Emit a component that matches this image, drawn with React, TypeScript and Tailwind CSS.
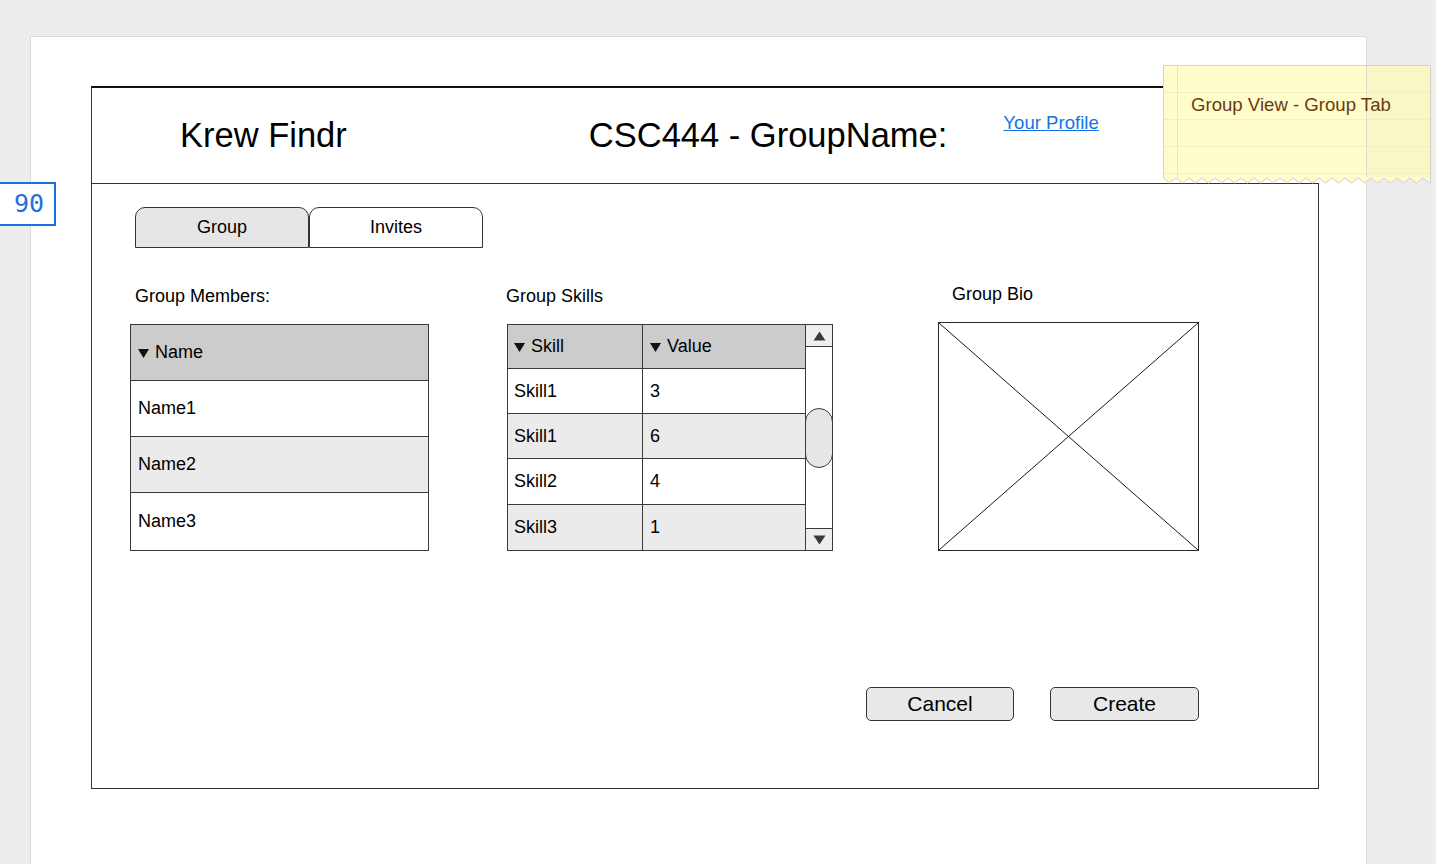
import React from "react";

const members = ["Name1", "Name2", "Name3"];

const skills = [
    { skill: "Skill1", value: "3" },
    { skill: "Skill1", value: "6" },
    { skill: "Skill2", value: "4" },
    { skill: "Skill3", value: "1" },
];

const skillRowHeights = ["h-[45px]", "h-[45px]", "h-[46px]", "h-[46px]"];

function SortArrow() {
    return (
        <svg width="11" height="9" viewBox="0 0 11 9" className="mr-[6px] mt-[2px] shrink-0">
            <polygon points="0,0 11,0 5.5,9" fill="#111" />
        </svg>
    );
}

function StickyNote() {
    const teeth = Array.from({ length: 21 })
        .map((_, i) => `${i * 13 + 6.5},6 ${(i + 1) * 13},1`)
        .join(" ");
    return (
        <div className="absolute left-[1163px] top-[65px] w-[268px] h-[120px]">
            <div className="relative w-full h-[112px] bg-[#fefdcb] border-t border-x border-[#d4d4c4] overflow-hidden">
                <div className="absolute top-0 bottom-0 left-[203px] right-0 bg-[#f9f7c6]" />
                <div className="absolute left-0 right-0 top-[26px] h-px bg-[#f1edc4]" />
                <div className="absolute left-0 right-0 top-[53px] h-px bg-[#f1edc4]" />
                <div className="absolute left-0 right-0 top-[80px] h-px bg-[#f1edc4]" />
                <div className="absolute left-0 right-0 top-[107px] h-px bg-[#f1edc4]" />
                <div className="absolute top-0 bottom-0 left-[13px] w-px bg-[#f6dfc4]" />
                <div className="absolute top-0 bottom-0 left-[202px] w-px bg-[#dcdbc8]" />
                <div className="relative pl-[27px] pt-[28px] text-[18.6px] leading-[21px] text-[#6b3a12]">
                    Group View - Group Tab
                </div>
            </div>
            <svg width="268" height="8" viewBox="0 0 268 8" className="block">
                <polygon points={"0,0 " + teeth + " 268,6 268,0"} fill="#fefdcb" />
                <polyline
                    points={"0.5,0 0.5,1 " + teeth + " 267.5,6 267.5,0"}
                    fill="none"
                    stroke="#cfcfcf"
                    strokeWidth="1"
                />
            </svg>
        </div>
    );
}

export default function App() {
    return (
        <div
            className="relative min-h-screen overflow-hidden bg-[#ededed] pl-[30px] pt-[36px] text-black"
            style={{ fontFamily: '"Liberation Sans", Arial, Helvetica, sans-serif' }}
        >
            <div className="w-[1337px] h-[840px] bg-white border border-[#dadada] pl-[60px] pt-[49px]">
                <div className="w-[1228px]">
                    {/* header */}
                    <div className="flex items-center h-[98px] border-t-2 border-l border-b border-t-[#111] border-l-[#333] border-b-[#333] pl-[88px]">
                        <span className="text-[34.5px] leading-none -mt-[1px]">Krew Findr</span>
                        <span className="ml-[242px] text-[34.5px] leading-none -mt-[1px]">CSC444 - GroupName:</span>
                        <a className="self-start mt-[24px] ml-[56px] text-[18.6px] leading-[21px] text-[#1473e6] underline">
                            Your Profile
                        </a>
                    </div>

                    {/* body */}
                    <div className="h-[605px] border-x border-b border-[#333] pl-[38px] pt-[23px]">
                        <div className="flex ml-[5px]">
                            <div className="w-[174px] h-[41px] flex items-center justify-center bg-[#e6e6e6] border border-[#333] rounded-t-[10px] text-[18px]">
                                Group
                            </div>
                            <div className="w-[174px] h-[41px] flex items-center justify-center bg-white border border-[#333] rounded-t-[10px] text-[18px]">
                                Invites
                            </div>
                        </div>

                        <div className="flex items-start mt-[36px]">
                            {/* members */}
                            <div className="w-[299px] flex flex-col">
                                <div className="h-[21px] pl-[5px] pt-[2px] text-[18px] leading-[21px]">Group Members:</div>
                                <div className="mt-[19px] border border-[#3a3a3a] text-[18px]">
                                    <div className="h-[55px] bg-[#cccccc] flex items-center pl-[7px]">
                                        <SortArrow />Name
                                    </div>
                                    {members.map((m, i) => (
                                        <div
                                            key={m}
                                            className={`flex items-center pl-[7px] border-t border-[#3a3a3a] ${i === 2 ? "h-[58px]" : "h-[56px]"} ${i === 1 ? "bg-[#ebebeb]" : "bg-white"}`}
                                        >
                                            {m}
                                        </div>
                                    ))}
                                </div>
                            </div>

                            {/* skills */}
                            <div className="ml-[78px] w-[326px] flex flex-col">
                                <div className="h-[21px] -ml-[1px] pt-[2px] text-[18px] leading-[21px]">Group Skills</div>
                                <div className="mt-[19px] flex">
                                    <div className="w-[299px] border border-[#3a3a3a] text-[18px]">
                                        <div className="h-[43px] bg-[#cccccc] flex">
                                            <div className="w-[135px] border-r border-[#3a3a3a] flex items-center pl-[6px]">
                                                <SortArrow />Skill
                                            </div>
                                            <div className="flex-1 flex items-center pl-[7px]">
                                                <SortArrow />Value
                                            </div>
                                        </div>
                                        {skills.map((s, i) => (
                                            <div
                                                key={i}
                                                className={`flex border-t border-[#3a3a3a] ${skillRowHeights[i]} ${i % 2 === 1 ? "bg-[#ebebeb]" : "bg-white"}`}
                                            >
                                                <div className="w-[135px] border-r border-[#3a3a3a] flex items-center pl-[6px]">
                                                    {s.skill}
                                                </div>
                                                <div className="flex-1 flex items-center pl-[7px]">{s.value}</div>
                                            </div>
                                        ))}
                                    </div>
                                    <div className="w-[27px] border-y border-r border-[#3a3a3a] flex flex-col">
                                        <div className="h-[22px] border-b border-[#3a3a3a] bg-[#eeeeee] flex items-center justify-center">
                                            <svg width="13" height="10" viewBox="0 0 13 10">
                                                <polygon points="6.5,0.5 12.5,9.5 0.5,9.5" fill="#3a3a3a" />
                                            </svg>
                                        </div>
                                        <div className="flex-1 bg-white pt-[61px]">
                                            <div className="h-[60px] -ml-[1px] -mr-[1px] rounded-full border border-[#3a3a3a] bg-[#e6e6e6]" />
                                        </div>
                                        <div className="h-[22px] border-t border-[#3a3a3a] bg-[#eeeeee] flex items-center justify-center">
                                            <svg width="13" height="10" viewBox="0 0 13 10">
                                                <polygon points="0.5,0.5 12.5,0.5 6.5,9.5" fill="#3a3a3a" />
                                            </svg>
                                        </div>
                                    </div>
                                </div>
                            </div>

                            {/* bio */}
                            <div className="ml-[105px] w-[261px] flex flex-col -mt-[2px]">
                                <div className="h-[21px] pl-[14px] pt-[2px] text-[18px] leading-[21px]">Group Bio</div>
                                <div className="mt-[19px] w-[261px] h-[229px] border border-[#2a2a2a]">
                                    <svg width="259" height="227" viewBox="0 0 259 227" className="block">
                                        <line x1="0" y1="0" x2="259" y2="227" stroke="#1a1a1a" strokeWidth="1" />
                                        <line x1="259" y1="0" x2="0" y2="227" stroke="#1a1a1a" strokeWidth="1" />
                                    </svg>
                                </div>
                            </div>
                        </div>

                        <div className="flex justify-end pr-[119px] mt-[136px] gap-[36px]">
                            <button className="w-[148px] h-[34px] rounded-[5px] border border-[#333] bg-[#e8e8e8] text-[21px] leading-none pb-[1px]">
                                Cancel
                            </button>
                            <button className="w-[149px] h-[34px] rounded-[5px] border border-[#333] bg-[#e8e8e8] text-[21px] leading-none pb-[1px]">
                                Create
                            </button>
                        </div>
                    </div>
                </div>
            </div>

            <StickyNote />

            <div
                className="absolute left-[-10px] top-[182px] w-[66px] h-[44px] border-2 border-[#1b6fdc] bg-white flex items-center justify-end pr-[10px] text-[25px] text-[#1f6fe0]"
                style={{ fontFamily: '"DejaVu Sans Mono", monospace' }}
            >
                90
            </div>
        </div>
    );
}
